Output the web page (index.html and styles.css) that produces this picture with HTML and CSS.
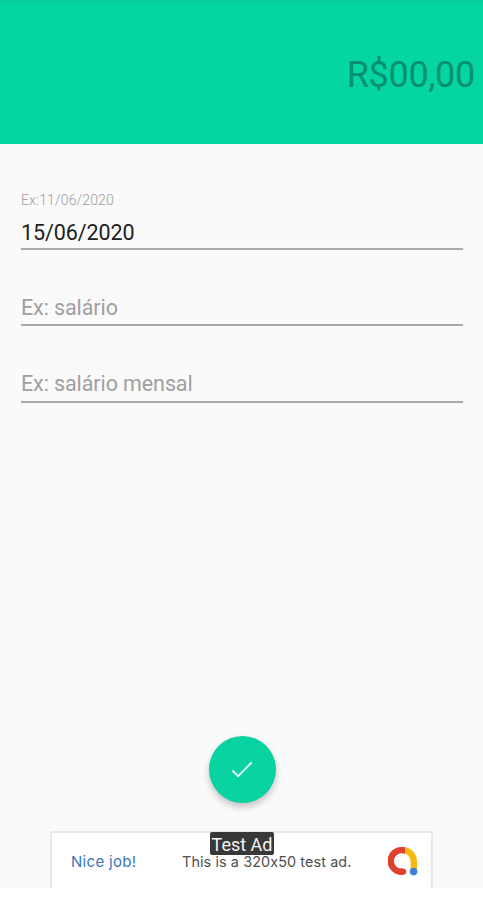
FILE: index.html
```html
<!DOCTYPE html>
<html lang="pt-BR">
<head>
<meta charset="utf-8">
<title>Receita</title>
<link rel="stylesheet" href="styles.css">
</head>
<body>
<div class="app">
  <header class="amount"><span class="amount-value">R$00,00</span></header>
  <main class="form">
    <div class="field field-date">
      <span class="label">Ex:11/06/2020</span>
      <span class="value">15/06/2020</span>
    </div>
    <div class="field field-category"><span class="hint">Ex: salário</span></div>
    <div class="field field-description"><span class="hint">Ex: salário mensal</span></div>
  </main>
  <button class="fab" aria-label="Salvar">
    <svg width="22" height="18" viewBox="0 0 22 18"><path d="M1.3 9.5 7.2 15.2 20.7 1.4" fill="none" stroke="#d5fff4" stroke-width="2"/></svg>
  </button>
  <aside class="ad">
    <span class="ad-title">Nice job!</span>
    <span class="ad-text">This is a 320x50 test ad.</span>
    <svg class="ad-logo" width="30" height="30" viewBox="0 0 30 30" fill="none" stroke-width="6.4">
      <path d="M15 4.2A10.8 11 0 0 1 25.8 15.2V25" stroke="#f8b912"/>
      <path d="M17 4.2H15A10.8 10.8 0 1 0 15 25.6" stroke="#e0402f"/>
      <circle cx="15" cy="25.6" r="3.2" fill="#e0402f"/>
      <circle cx="25.6" cy="25.6" r="3.8" fill="#3f7fd4"/>
    </svg>
    <span class="ad-badge">Test Ad</span>
  </aside>
</div>
</body>
</html>
```
FILE: styles.css
```css
* { box-sizing: border-box; }
body { margin: 0; background: #fff; font-family: Roboto, sans-serif; }
.app {
  display: flex;
  flex-direction: column;
  width: 483px;
  height: 888px;
  background: #fafafa;
  overflow: hidden;
}
.amount {
  height: 144px;
  padding: 54px 8px 0 0;
  background: linear-gradient(#05cb98, #04d5a1 5px);
  text-align: right;
}
.amount-value { font-size: 36px; line-height: 42px; color: #05916f; letter-spacing: -0.3px; }
.form { flex: 1; padding: 0 20px 0 21px; }
.field {
  display: flex;
  flex-direction: column;
  justify-content: flex-end;
  border-bottom: 2px solid #a9a9a9;
}
.field-date { height: 106px; padding-bottom: 2px; }
.field-category { height: 76px; padding-bottom: 3px; }
.field-description { height: 77px; padding-bottom: 4px; }
.label { font-size: 14px; line-height: 18px; color: #9c9c9c; font-weight: 300; letter-spacing: 0.15px; }
.value { margin-top: 11px; font-size: 21.5px; line-height: 26px; color: #202020; letter-spacing: -0.1px; }
.hint { font-size: 21.5px; line-height: 26px; color: #a0a0a0; letter-spacing: -0.1px; }
.fab {
  flex: none;
  display: flex;
  align-items: center;
  justify-content: center;
  align-self: center;
  width: 67px;
  height: 67px;
  margin: 0 0 28px 1px;
  padding: 0;
  border: 0;
  border-radius: 50%;
  background: #08d2a0;
  box-shadow: 0 4px 7px rgba(0, 0, 0, .22);
}
.ad {
  flex: none;
  position: relative;
  display: flex;
  align-items: flex-start;
  width: 383px;
  height: 57px;
  margin-left: 50px;
  padding: 15px 13px 0 19px;
  border: 2px solid #e8e8e8;
  border-bottom: 0;
  background: #fff;
  white-space: nowrap;
}
.ad-title { width: 111px; font: 400 15px/28px Inter, sans-serif; letter-spacing: 0.3px; color: #3a74bd; }
.ad-text { flex: 1; font: 14.4px/28px Inter, sans-serif; font-feature-settings: "calt" 0; letter-spacing: 0.1px; color: #505050; }
.ad-logo { flex: none; margin-top: -2px; }
.ad-badge {
  position: absolute;
  left: 158px;
  top: -1px;
  width: 64px;
  height: 23px;
  border-radius: 2px;
  background: #383838;
  color: #f5f5f5;
  font-size: 18px;
  line-height: 25px;
  text-align: center;
}
```
